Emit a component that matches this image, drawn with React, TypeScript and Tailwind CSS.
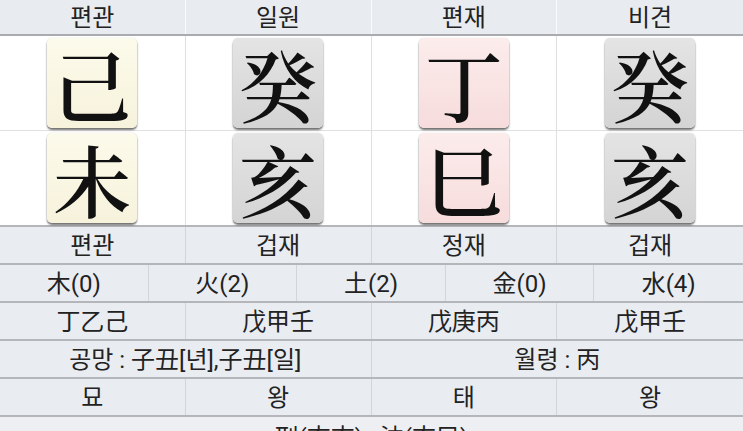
import React from "react";

const txt = "font-['Roboto','Noto_Sans_CJK_KR',sans-serif] text-[24px] text-[#222] leading-none";
const hanja = "font-['Noto_Serif_CJK_SC','Noto_Serif_CJK_KR','Noto_Sans_CJK_SC',serif]";

type Tone = "earth" | "water" | "fire";

const toneBg: Record<Tone, string> = {
  earth: "bg-gradient-to-b from-[#fcfaea] to-[#f6f2dc]",
  water: "bg-gradient-to-b from-[#e4e4e4] to-[#d4d4d4]",
  fire: "bg-gradient-to-b from-[#fcecec] to-[#f7dcdc]",
};

function Tile({ ch, tone }: { ch: string; tone: Tone }) {
  return (
    <div
      className={`w-[90px] h-[90px] rounded-[5px] flex items-center justify-center shadow-[0_2px_2px_rgba(0,0,0,0.55),0_0_1px_rgba(0,0,0,0.25)] ${toneBg[tone]}`}
    >
      <span className={`${hanja} text-[78px] leading-[78px] text-[#111] font-semibold`}>{ch}</span>
    </div>
  );
}

function Row({ items, cols }: { items: string[]; cols: string }) {
  return (
    <div className={`grid ${cols} h-[38px] bg-[#e9ecf0] border-b-2 border-[#b4b6ba]`}>
      {items.map((t, i) => (
        <div
          key={i}
          className={`flex items-center justify-center pt-[2px] ${txt} ${i < items.length - 1 ? "border-r border-[#d2d5da]" : ""}`}
        >
          {t}
        </div>
      ))}
    </div>
  );
}

export default function App() {
  const stems: [string, Tone][] = [
    ["己", "earth"],
    ["癸", "water"],
    ["丁", "fire"],
    ["癸", "water"],
  ];
  const branches: [string, Tone][] = [
    ["未", "earth"],
    ["亥", "water"],
    ["巳", "fire"],
    ["亥", "water"],
  ];

  return (
    <div className="w-[743px] h-[431px] overflow-hidden bg-white">
      <div className="grid grid-cols-4 h-[36px] bg-[#e8ebf0] border-b-2 border-[#a9abaf]">
        {["편관", "일원", "편재", "비견"].map((t, i) => (
          <div key={i} className={`flex items-center justify-center pt-[1px] ${txt} ${i < 3 ? "border-r border-[#fafbfc]" : ""}`}>
            {t}
          </div>
        ))}
      </div>

      <div className="grid grid-cols-4 h-[95px] border-b border-[#e0e0e0]">
        {stems.map(([c, t], i) => (
          <div key={i} className={`flex items-start justify-center pt-[2px] ${i < 3 ? "border-r border-[#e0e0e0]" : ""}`}>
            <Tile ch={c} tone={t} />
          </div>
        ))}
      </div>

      <div className="grid grid-cols-4 h-[96px] border-b-2 border-[#b4b6ba]">
        {branches.map(([c, t], i) => (
          <div key={i} className={`flex items-start justify-center pt-[2px] ${i < 3 ? "border-r border-[#e0e0e0]" : ""}`}>
            <Tile ch={c} tone={t} />
          </div>
        ))}
      </div>

      <Row cols="grid-cols-4" items={["편관", "겁재", "정재", "겁재"]} />
      <Row cols="grid-cols-5" items={["木(0)", "火(2)", "土(2)", "金(0)", "水(4)"]} />
      <Row cols="grid-cols-4" items={["丁乙己", "戊甲壬", "戊庚丙", "戊甲壬"]} />
      <Row cols="grid-cols-2" items={["공망 : 子丑[년],子丑[일]", "월령 : 丙"]} />
      <Row cols="grid-cols-4" items={["묘", "왕", "태", "왕"]} />
      <div className={`h-[40px] bg-[#edeff2] flex items-start justify-center pt-[9px] ${txt}`}>
        刑(亥亥) , 沖(亥巳)
      </div>
    </div>
  );
}
